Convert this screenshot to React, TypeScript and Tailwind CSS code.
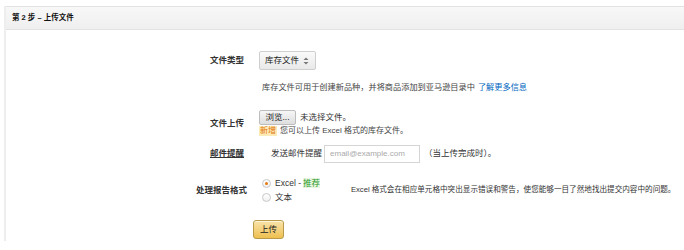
import React from "react";

const font = { fontFamily: '"Liberation Sans", "Noto Sans CJK SC", sans-serif' };

function Radio({ checked }: { checked?: boolean }) {
  return (
    <span className="inline-flex w-[9px] h-[9px] rounded-full border border-[#c8c8c8] bg-gradient-to-b from-white to-[#f0f0f0] items-center justify-center mr-[4px]">
      {checked && <span className="w-[3px] h-[3px] rounded-full bg-[#e47911]" />}
    </span>
  );
}

export default function App() {
  return (
    <div className="w-[684px] h-[250px] bg-white pt-[6px] pl-[4px] text-[#333]" style={font}>
      <div className="h-[235px] border-l-2 border-[#eeeeee]">
        <div className="h-[24px] border-y border-[#e2e2e2] bg-gradient-to-b from-[#f8f8f8] to-[#efefef] flex items-center pl-[6px] text-[7.5px] font-bold text-[#111]">
          第 2 步 – 上传文件
        </div>

        {/* file type */}
        <div className="flex items-center mt-[21px] h-[19px]">
          <div className="w-[238px] text-right text-[8.5px] font-bold">文件类型</div>
          <div className="ml-[15px] h-[19px] w-[57px] border border-[#cfcfcf] rounded-[2px] bg-gradient-to-b from-[#fafafa] to-[#e9e9e9] flex items-center pl-[5px] text-[8.5px] text-[#222]">
            库存文件
            <svg width="6" height="8" viewBox="0 0 6 8" className="ml-[4px]">
              <path d="M3 0.5 L5.5 3 H0.5 Z" fill="#777" />
              <path d="M3 7.5 L5.5 5 H0.5 Z" fill="#777" />
            </svg>
          </div>
        </div>

        <div className="mt-[12px] ml-[256px] h-[12px] flex items-center text-[8.2px] text-[#444] whitespace-nowrap">
          库存文件可用于创建新品种，并将商品添加到亚马逊目录中
          <span className="ml-[3px] text-[#0066c0]">了解更多信息</span>
        </div>

        {/* upload */}
        <div className="flex items-center mt-[16px]">
          <div className="w-[238px] text-right text-[8.5px] font-bold">文件上传</div>
          <div className="ml-[15px] flex flex-col">
            <div className="flex items-center h-[15px]">
              <span className="h-[15px] w-[37px] border border-[#bdbdbd] rounded-[2px] bg-gradient-to-b from-[#f6f6f6] to-[#dedede] flex items-center justify-center text-[8.5px] text-[#222]">
                浏览...
              </span>
              <span className="ml-[4px] text-[8.5px] text-[#333]">未选择文件。</span>
            </div>
            <div className="flex items-center h-[10px] mt-[1px] text-[8px] text-[#444]">
              <span className="bg-[#fcebb6] text-[#e47911] px-[1px] leading-[10px]">新增</span>
              <span className="ml-[3px]">您可以上传 Excel 格式的库存文件。</span>
            </div>
          </div>
        </div>

        {/* email */}
        <div className="flex items-center mt-[8px] h-[19px]">
          <div className="w-[238px] text-right text-[8.5px] font-bold underline">邮件提醒</div>
          <div className="ml-[27px] flex items-center text-[8.5px] text-[#333] whitespace-nowrap">
            发送邮件提醒
            <input
              placeholder="email@example.com"
              className="ml-[2px] w-[96px] h-[18px] border border-[#d5d5d5] px-[5px] text-[8px] placeholder:text-[#aaa] outline-none"
              style={font}
            />
            <span className="ml-[4px]">（当上传完成时）。</span>
          </div>
        </div>

        {/* report format */}
        <div className="flex items-center mt-[13px] h-[28px]">
          <div className="w-[241px] text-right text-[8.5px] font-bold">处理报告格式</div>
          <div className="ml-[15px] flex flex-col w-[81px]">
            <div className="flex items-center h-[14px] text-[8.5px]">
              <Radio checked />
              <span>Excel - </span>
              <span className="ml-[2px] text-[#2a9a2a] bg-[#e8f5e0] leading-[10px]">推荐</span>
            </div>
            <div className="flex items-center h-[14px] text-[8.5px]">
              <Radio />
              <span>文本</span>
            </div>
          </div>
          <div className="ml-[8px] text-[7.6px] text-[#333] whitespace-nowrap">
            Excel 格式会在相应单元格中突出显示错误和警告，使您能够一目了然地找出提交内容中的问题。
          </div>
        </div>

        <div className="mt-[11px] ml-[247px]">
          <span className="inline-flex items-center justify-center w-[31px] h-[19px] rounded-[3px] border border-[#b99a4a] bg-gradient-to-b from-[#f8e3a8] to-[#eec04e] text-[8.5px] text-[#222] shadow-[0_1px_0_rgba(255,255,255,0.6)_inset]">
            上传
          </span>
        </div>
      </div>
    </div>
  );
}
